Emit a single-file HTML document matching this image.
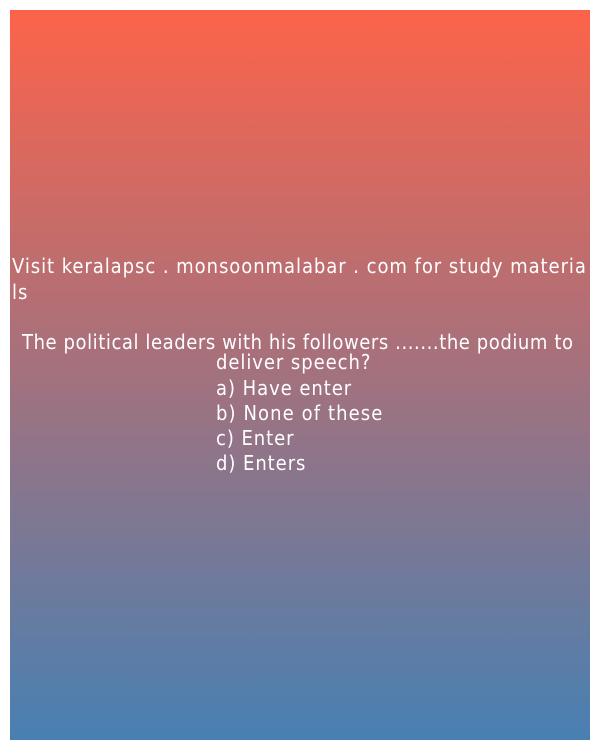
<!DOCTYPE html>
<html><head><style>
html,body{margin:0;padding:0;background:#fff;width:600px;height:750px;overflow:hidden}
#box{position:absolute;left:10px;top:10px;width:580px;height:730px;background:linear-gradient(#fd634a,#4880b2)}
.t{position:absolute;color:#fff;font-family:"DejaVu Sans Condensed","DejaVu Sans","Liberation Sans",sans-serif;font-size:20px;white-space:nowrap;line-height:24px;letter-spacing:0.95px}
</style></head><body>
<div id="box"></div>
<div class="t" style="left:12px;top:254px">Visit keralapsc . monsoonmalabar . com for study materia</div>
<div class="t" style="left:12px;top:280px">ls</div>
<div class="t" style="left:22px;top:330px;letter-spacing:0.58px">The political leaders with his followers .......the podium to</div>
<div class="t" style="left:216px;top:350px">deliver speech?</div>
<div class="t" style="left:216px;top:376px">a) Have enter</div>
<div class="t" style="left:216px;top:401px;letter-spacing:1.1px">b) None of these</div>
<div class="t" style="left:216px;top:426px">c) Enter</div>
<div class="t" style="left:216px;top:451px">d) Enters</div>
</body></html>
